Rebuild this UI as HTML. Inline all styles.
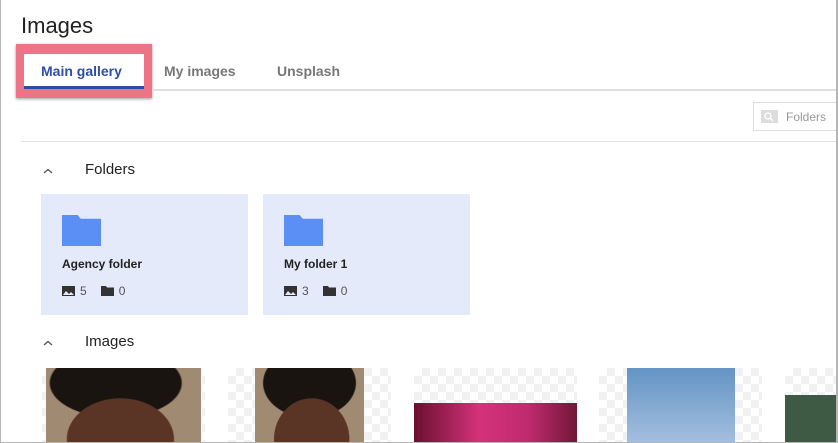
<!DOCTYPE html>
<html><head><style>
*{margin:0;padding:0;box-sizing:border-box}
body{width:838px;height:443px;overflow:hidden;background:#fff;font-family:"Liberation Sans",sans-serif;position:relative}
.frame{position:absolute;left:0;top:0;width:838px;height:443px;border:1px solid #b5b5b5;border-top:none;border-right:2px solid #b5b5b5}
.a{position:absolute}
.chk{background-color:#fff;background-image:linear-gradient(45deg,#f1f1f1 25%,transparent 25%,transparent 75%,#f1f1f1 75%),linear-gradient(45deg,#f1f1f1 25%,transparent 25%,transparent 75%,#f1f1f1 75%);background-size:16px 16px;background-position:0 0,8px 8px}
.card{position:absolute;top:194px;width:207px;height:121px;background:#e5eafb}
.fold{position:absolute;left:21px;top:21px;width:39px;height:31px;background:#5b8ff6;clip-path:polygon(0 0,40% 0,48% 12%,100% 12%,100% 100%,0 100%)}
.nm{position:absolute;left:21px;top:63px;font-size:12px;font-weight:bold;color:#222}
.st{position:absolute;left:21px;top:90px;font-size:12px;color:#555;display:flex;align-items:center}
.st svg{margin-right:5px}
</style></head><body>
<div class="a" style="left:21px;top:13px;font-size:22px;color:#222">Images</div>
<div class="a" style="left:16px;top:44px;width:136px;height:54px;background:#ec7486;box-shadow:0 1px 3px rgba(0,0,0,.4)"></div>
<div class="a" style="left:24px;top:54px;width:120px;height:35px;background:#fff;border-bottom:3px solid #2d4fa3"></div>
<div class="a" style="left:41px;top:63px;font-size:14px;font-weight:bold;color:#2d4fa3">Main gallery</div>
<div class="a" style="left:164px;top:63px;font-size:14px;font-weight:bold;color:#777">My images</div>
<div class="a" style="left:277px;top:63px;font-size:14px;font-weight:bold;color:#777">Unsplash</div>
<div class="a" style="left:152px;top:89px;width:686px;height:2px;background:#e0e0e0"></div>
<div class="a" style="left:753px;top:102px;width:86px;height:29px;border:1px solid #ddd"></div>
<div class="a" style="left:761px;top:110px;width:17px;height:13px;background:#ddd"></div>
<svg class="a" style="left:763px;top:111px" width="12" height="11"><circle cx="5" cy="5" r="3" fill="none" stroke="#fff" stroke-width="1.3"/><path d="M7 7L10 10" stroke="#fff" stroke-width="1.3"/></svg>
<div class="a" style="left:786px;top:110px;font-size:12px;color:#999">Folders</div>
<div class="a" style="left:21px;top:141px;width:817px;height:1px;background:#e0e0e0"></div>
<svg class="a" style="left:43px;top:168px" width="10" height="6"><path d="M1 5L5 1.5L9 5" fill="none" stroke="#555" stroke-width="1.3"/></svg>
<div class="a" style="left:85px;top:161px;font-size:15px;color:#222">Folders</div>
<div class="card" style="left:41px"><div class="fold"></div><div class="nm">Agency folder</div><div class="st"><svg width="13" height="10"><rect width="13" height="10" fill="#333"/><path d="M1 9L4 5L7 8L9 6L12 9Z" fill="#e5eafb"/></svg>5<svg style="margin-left:14px" width="13" height="10"><path d="M0 0H5L6 1.5H13V10H0Z" fill="#333"/></svg>0</div></div>
<div class="card" style="left:263px"><div class="fold"></div><div class="nm">My folder 1</div><div class="st"><svg width="13" height="10"><rect width="13" height="10" fill="#333"/><path d="M1 9L4 5L7 8L9 6L12 9Z" fill="#e5eafb"/></svg>3<svg style="margin-left:14px" width="13" height="10"><path d="M0 0H5L6 1.5H13V10H0Z" fill="#333"/></svg>0</div></div>
<svg class="a" style="left:43px;top:340px" width="10" height="6"><path d="M1 5L5 1.5L9 5" fill="none" stroke="#555" stroke-width="1.3"/></svg>
<div class="a" style="left:85px;top:333px;font-size:15px;color:#222">Images</div>
<div class="a chk" style="left:42px;top:368px;width:163px;height:75px"></div>
<div class="a" style="left:46px;top:368px;width:155px;height:75px;background:radial-gradient(ellipse 38% 60% at 48% 95%,#5a3526 90%,transparent 92%),radial-gradient(ellipse 60% 65% at 45% 20%,#1a1410 70%,transparent 72%),#a08a72"></div>
<div class="a chk" style="left:228px;top:368px;width:163px;height:75px"></div>
<div class="a" style="left:255px;top:368px;width:109px;height:75px;background:radial-gradient(ellipse 38% 60% at 52% 95%,#5a3526 90%,transparent 92%),radial-gradient(ellipse 60% 65% at 50% 20%,#1a1410 70%,transparent 72%),#a08a72"></div>
<div class="a chk" style="left:414px;top:368px;width:163px;height:75px"></div>
<div class="a" style="left:414px;top:403px;width:163px;height:40px;background:linear-gradient(90deg,#6a1030,#d4327a 40%,#c02a6e 70%,#701838)"></div>
<div class="a chk" style="left:599px;top:368px;width:163px;height:75px"></div>
<div class="a" style="left:627px;top:368px;width:108px;height:75px;background:linear-gradient(#6494c4,#a3bfdf)"></div>
<div class="a chk" style="left:785px;top:368px;width:53px;height:75px"></div>
<div class="a" style="left:785px;top:395px;width:53px;height:48px;background:#3e5a44"></div>
<div class="frame"></div>
</body></html>
